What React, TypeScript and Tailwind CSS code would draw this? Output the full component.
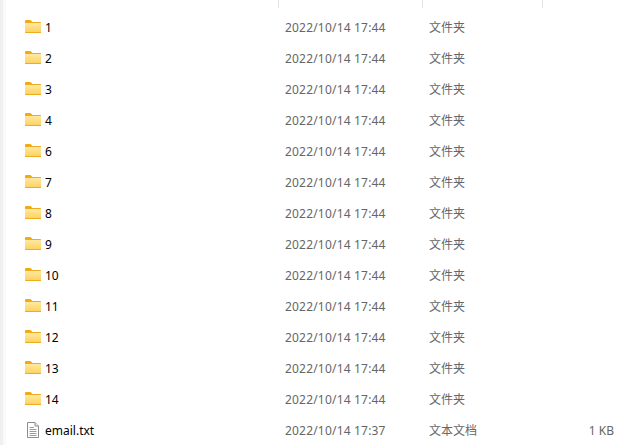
const rows: [string, string][] = [
  ["1", "17:44"], ["2", "17:44"], ["3", "17:44"], ["4", "17:44"], ["6", "17:44"], ["7", "17:44"], ["8", "17:44"],
  ["9", "17:44"], ["10", "17:44"], ["11", "17:44"], ["12", "17:44"], ["13", "17:44"], ["14", "17:44"],
];

function FolderIcon() {
  return (
    <svg width="16" height="13" viewBox="0 0 16 13" className="mt-[8px] shrink-0">
      <defs>
        <linearGradient id="folderFill" x1="0" y1="0" x2="0" y2="1">
          <stop offset="0" stopColor="#ffe9a0" />
          <stop offset="1" stopColor="#fdd263" />
        </linearGradient>
      </defs>
      <path d="M0 1Q0 0 1 0H5.5L7.5 2V4H0Z" fill="#f2ab0c" />
      <rect x="0" y="2" width="16" height="11" rx="0.5" fill="#eeac22" />
      <rect x="0" y="3" width="16" height="9" fill="url(#folderFill)" />
    </svg>
  );
}

function TextIcon() {
  return (
    <svg width="12" height="16" viewBox="0 0 12 16" className="mt-[7px] shrink-0">
      <path d="M.5.5H8L11.5 4V15.5H.5Z" fill="#fff" stroke="#8c8c8c" />
      <path d="M8 .5V4H11.5" fill="#eee" stroke="#8c8c8c" />
      <path d="M2.5 5.5H7M2.5 7.5H9.5M2.5 9.5H9.5M2.5 11.5H9.5M2.5 13.5H9.5" stroke="#9a9a9a" fill="none" />
    </svg>
  );
}

function Row({ icon, name, date, type, size }: { icon: React.ReactNode; name: string; date: string; type: string; size?: string }) {
  return (
    <div className="grid h-[31px] shrink-0 grid-cols-[25px_234px_144px_121px_79px] items-center text-[12px] text-[#666]">
      <div className="flex h-full items-start justify-center">{icon}</div>
      <div className="text-black">{name}</div>
      <div className="pl-[6px] tracking-[0.19px]">{date}</div>
      <div className="pl-[6px]">{type}</div>
      <div className="pr-[9px] text-right">{size}</div>
    </div>
  );
}

export default function App() {
  return (
    <div
      className="flex h-[445px] w-[623px] overflow-hidden bg-white"
      style={{ fontFamily: '"Noto Sans", "Noto Sans CJK SC", sans-serif' }}
    >
      <div className="h-full w-[3px] shrink-0 bg-[#f0f0f0]" />
      <div className="w-[3px] shrink-0 bg-[#fafafa]" />
      <div className="w-[14px] shrink-0" />
      <div className="flex min-w-0 flex-1 flex-col">
        <div className="grid h-[8px] shrink-0 grid-cols-[259px_144px_120px_80px]">
          <div className="border-r border-[#e5e5e5]" />
          <div className="border-r border-[#e5e5e5]" />
          <div className="border-r border-[#e5e5e5]" />
        </div>
        <div className="h-[4px] shrink-0" />
        {rows.map(([name, time]) => (
          <Row key={name} icon={<FolderIcon />} name={name} date={`2022/10/14 ${time}`} type="文件夹" />
        ))}
        <Row icon={<TextIcon />} name="email.txt" date="2022/10/14 17:37" type="文本文档" size="1 KB" />
      </div>
    </div>
  );
}
